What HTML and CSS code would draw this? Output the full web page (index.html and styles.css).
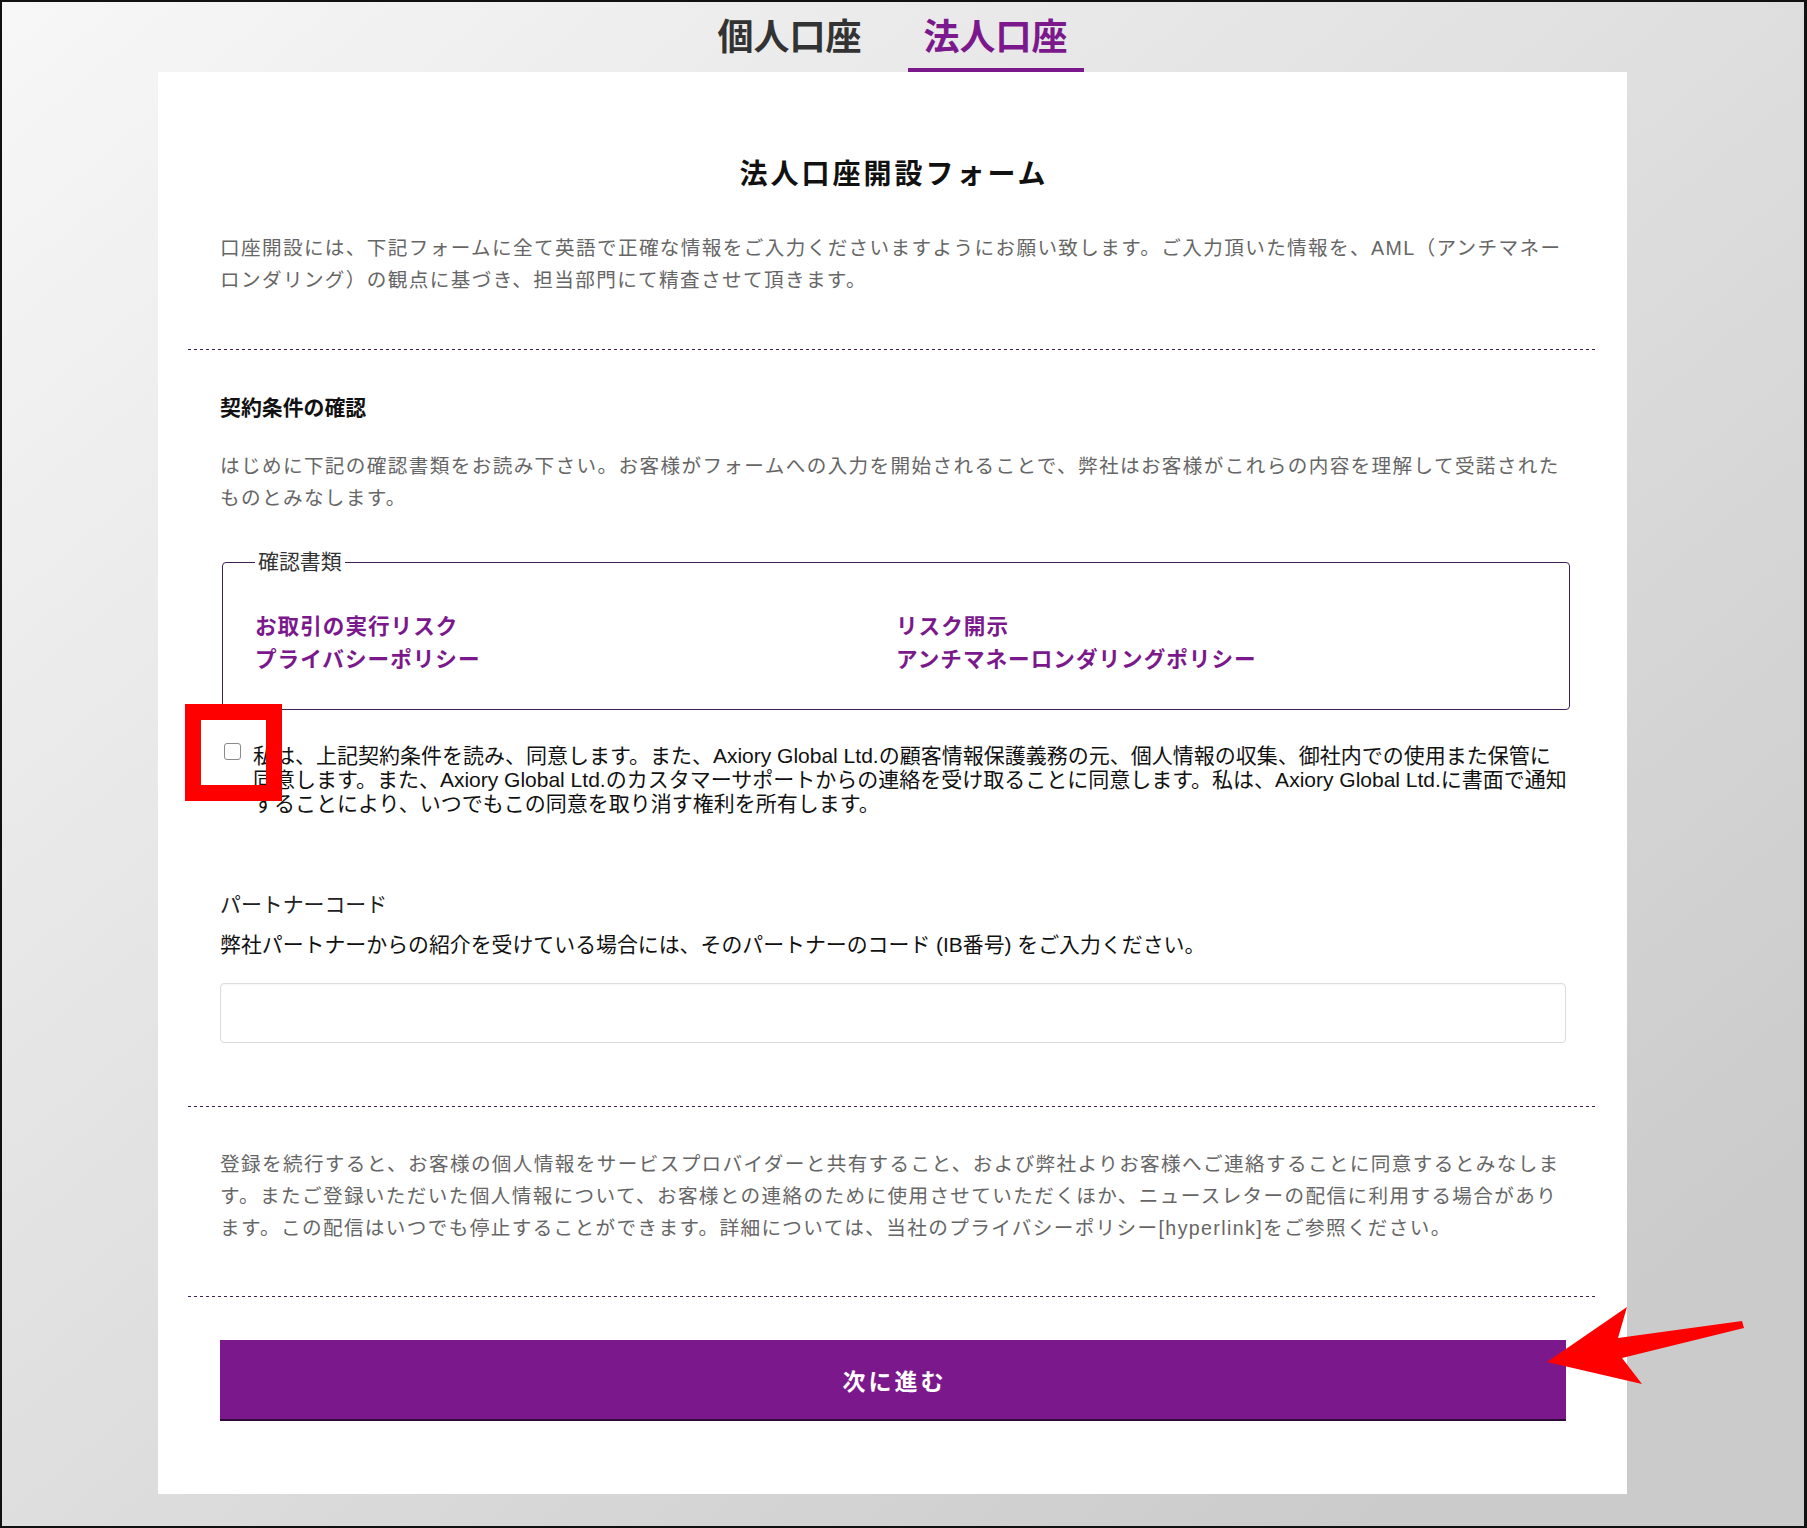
FILE: index.html
```html
<!DOCTYPE html>
<html lang="ja">
<head>
<meta charset="utf-8">
<title>法人口座開設フォーム</title>
<link rel="stylesheet" href="styles.css">
</head>
<body>
<div class="frame">
  <nav class="tabs">
    <a class="tab">個人口座</a>
    <a class="tab tab-active">法人口座</a>
  </nav>
  <main class="card">
    <section class="block block-head">
      <h1 class="title">法人口座開設フォーム</h1>
      <p class="lead">口座開設には、下記フォームに全て英語で正確な情報をご入力くださいますようにお願い致します。ご入力頂いた情報を、AML（アンチマネー<br>ロンダリング）の観点に基づき、担当部門にて精査させて頂きます。</p>
    </section>
    <div class="sep"></div>
    <section class="block block-terms">
      <h2 class="heading">契約条件の確認</h2>
      <p class="lead lead-2">はじめに下記の確認書類をお読み下さい。お客様がフォームへの入力を開始されることで、弊社はお客様がこれらの内容を理解して受諾された<br>ものとみなします。</p>
      <fieldset class="docs">
        <legend class="docs-legend">確認書類</legend>
        <div class="docs-grid">
          <ul class="doc-list">
            <li><a class="doc-link">お取引の実行リスク</a></li>
            <li><a class="doc-link">プライバシーポリシー</a></li>
          </ul>
          <ul class="doc-list">
            <li><a class="doc-link">リスク開示</a></li>
            <li><a class="doc-link">アンチマネーロンダリングポリシー</a></li>
          </ul>
        </div>
      </fieldset>
      <label class="consent">
        <input type="checkbox" class="check">
        <span class="consent-text">私は、上記契約条件を読み、同意します。また、Axiory Global Ltd.の顧客情報保護義務の元、個人情報の収集、御社内での使用また保管に<br>同意します。また、Axiory Global Ltd.のカスタマーサポートからの連絡を受け取ることに同意します。私は、Axiory Global Ltd.に書面で通知<br>することにより、いつでもこの同意を取り消す権利を所有します。</span>
      </label>
      <div class="partner">
        <div class="partner-label">パートナーコード</div>
        <div class="partner-desc">弊社パートナーからの紹介を受けている場合には、そのパートナーのコード (IB番号) をご入力ください。</div>
        <input type="text" class="text-input">
      </div>
    </section>
    <div class="sep"></div>
    <section class="block block-notice">
      <p class="lead lead-3">登録を続行すると、お客様の個人情報をサービスプロバイダーと共有すること、および弊社よりお客様へご連絡することに同意するとみなしま<br>す。またご登録いただいた個人情報について、お客様との連絡のために使用させていただくほか、ニュースレターの配信に利用する場合があり<br>ます。この配信はいつでも停止することができます。詳細については、当社のプライバシーポリシー[hyperlink]をご参照ください。</p>
    </section>
    <div class="sep"></div>
    <section class="block block-submit">
      <button type="button" class="submit">次に進む</button>
    </section>
  </main>
  <svg class="annot" viewBox="0 0 1807 1528" width="1807" height="1528" aria-hidden="true">
    <rect x="193" y="712" width="81" height="81" fill="none" stroke="#ff0000" stroke-width="16"/>
    <polygon points="1547,1362 1627,1307 1618,1338 1742,1321 1744,1328 1622,1358 1642,1384" fill="#ff0000"/>
  </svg>
</div>
</body>
</html>
```

FILE: styles.css
```css
html, body {
  margin: 0;
  padding: 0;
}
body {
  font-family: "Liberation Sans", "Noto Sans CJK JP", sans-serif;
  color: #111;
}
.frame {
  position: relative;
  width: 1807px;
  height: 1528px;
  box-sizing: border-box;
  border: 2px solid #111;
  border-right-width: 3px;
  background: linear-gradient(to bottom right, #f7f7f7 0%, #cbcbcb 88%);
  overflow: hidden;
}
.tabs {
  display: flex;
  justify-content: center;
  gap: 30px;
  width: 1469px;
  margin-left: 156px;
}
.tab {
  display: block;
  padding: 14px 16px 9px;
  font-size: 36px;
  line-height: 43px;
  font-weight: 700;
  color: #333;
  border-bottom: 4px solid transparent;
}
.tab-active {
  color: #7b198c;
  border-bottom-color: #7b198c;
}
.card {
  width: 1469px;
  margin-left: 156px;
  box-sizing: border-box;
  background: #fff;
  padding: 84px 30px 73px;
}
.block {
  padding: 0 32px;
}
.title {
  margin: 0;
  text-align: center;
  font-size: 28px;
  line-height: 38px;
  font-weight: 700;
  letter-spacing: 3px;
  padding-left: 3px;
  color: #111;
}
.lead {
  margin: 38px 0 0;
  font-size: 19.6px;
  line-height: 32px;
  letter-spacing: 1.38px;
  color: #666;
  white-space: nowrap;
}
.sep {
  height: 1px;
  background-image: repeating-linear-gradient(to right, #3e2150 0 3px, transparent 3px 6px);
}
.block-head {
  padding-bottom: 53px;
}
.block-terms {
  padding-top: 43px;
  padding-bottom: 63px;
}
.heading {
  margin: 0;
  font-size: 20.9px;
  line-height: 30px;
  font-weight: 700;
  color: #111;
}
.lead-2 {
  margin-top: 27px;
}
.docs {
  width: 1348px;
  box-sizing: border-box;
  margin: 33px 0 0 2px;
  padding: 33px 32px 33px;
  border: 1px solid #3e2150;
  border-radius: 4px;
}
.docs-legend {
  padding: 0 3px;
  font-size: 20.9px;
  line-height: 30px;
  color: #333;
}
.docs-grid {
  display: grid;
  grid-template-columns: 1fr 1fr;
}
.doc-list {
  list-style: none;
  margin: 0;
  padding: 0;
}
.doc-link {
  font-size: 21.6px;
  line-height: 33px;
  font-weight: 700;
  letter-spacing: 1px;
  color: #7b198c;
  text-decoration: none;
}
.consent {
  display: flex;
  align-items: flex-start;
  gap: 12px;
  margin-top: 34px;
}
.check {
  appearance: none;
  -webkit-appearance: none;
  flex: none;
  width: 17px;
  height: 17px;
  margin: -1px 0 0 4px;
  box-sizing: border-box;
  border: 1px solid #8a8a8a;
  border-radius: 3px;
  background: #fff;
}
.consent-text {
  font-size: 21px;
  line-height: 24px;
  color: #111;
  white-space: nowrap;
}
.partner {
  margin-top: 69px;
}
.partner-label,
.partner-desc {
  font-size: 20.9px;
  line-height: 40px;
  color: #222;
}
.partner-desc {
  color: #111;
}
.text-input {
  display: block;
  width: calc(100% + 1px);
  height: 60px;
  box-sizing: border-box;
  margin-top: 18px;
  border: 1px solid #dcdcdc;
  border-radius: 4px;
  box-shadow: inset 0 1px 2px rgba(0, 0, 0, 0.04);
  background: #fff;
}
.block-notice {
  padding-top: 41px;
  padding-bottom: 52px;
}
.lead-3 {
  margin-top: 0;
}
.block-submit {
  padding-top: 43px;
}
.submit {
  display: block;
  width: calc(100% + 1px);
  height: 81px;
  border: 0;
  border-bottom: 2px solid #2f0b3a;
  background: #7b198c;
  color: #fff;
  font-family: inherit;
  font-size: 23px;
  font-weight: 700;
  letter-spacing: 3px;
  padding: 0 0 0 3px;
}
.annot {
  position: absolute;
  top: -2px;
  left: -2px;
  pointer-events: none;
}
```
